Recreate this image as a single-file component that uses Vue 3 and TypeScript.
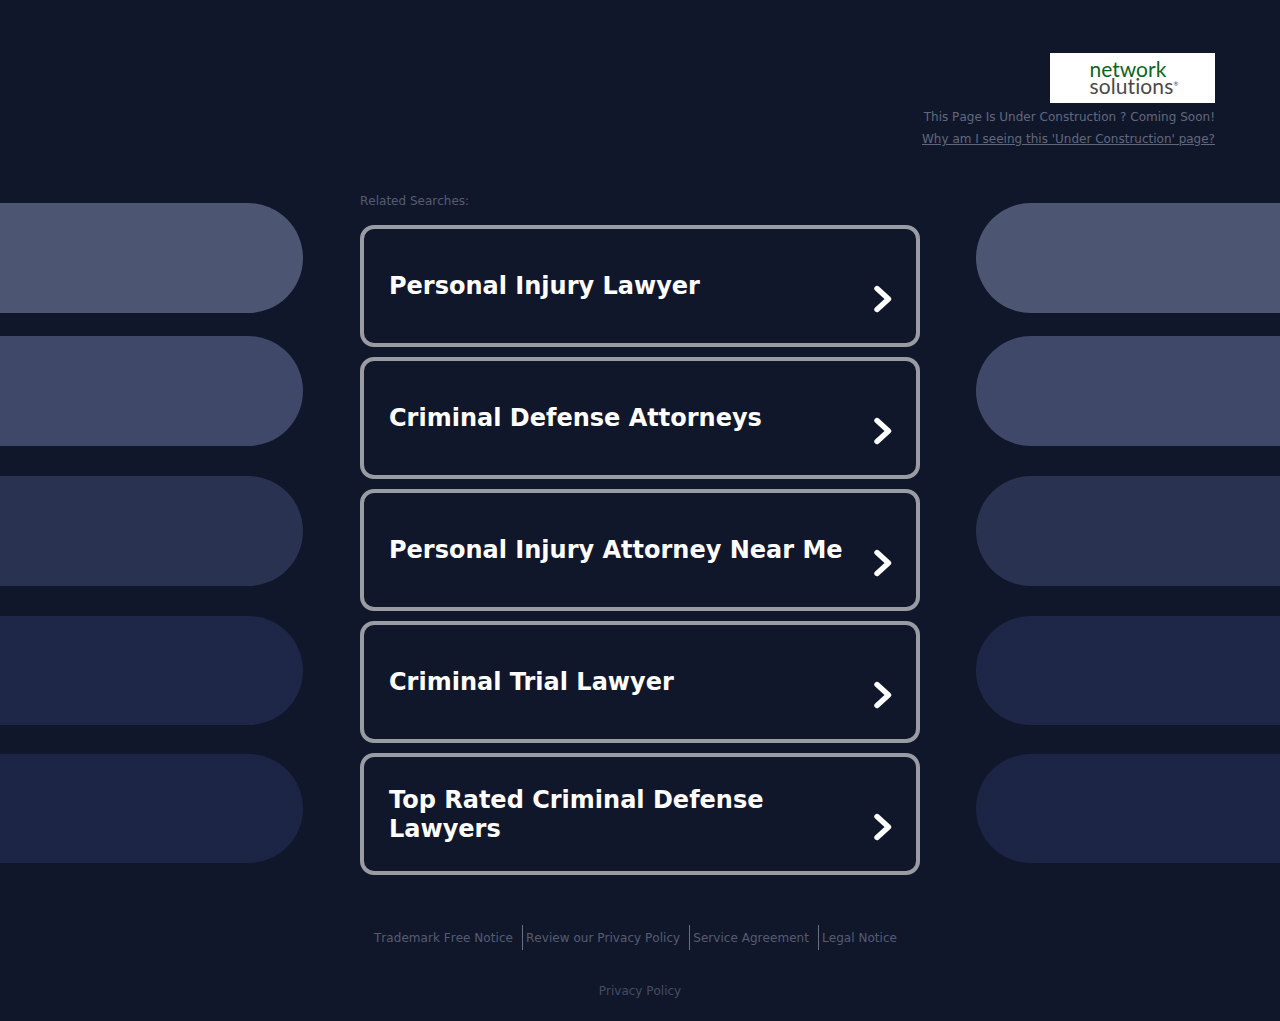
<script setup lang="ts">
const searches: string[] = [
  'Personal Injury Lawyer',
  'Criminal Defense Attorneys',
  'Personal Injury Attorney Near Me',
  'Criminal Trial Lawyer',
  'Top Rated Criminal Defense Lawyers',
]
const pills: string[] = ['p1', 'p2', 'p3', 'p4', 'p5']
const footerLinks: string[] = ['Trademark Free Notice', 'Review our Privacy Policy', 'Service Agreement', 'Legal Notice']
</script>

<template>
  <div class="page">
    <header class="header">
      <div class="logo">
        <div class="logo-inner">
          <span class="logo-network">network</span>
          <span class="logo-solutions">solutions<sup class="reg">®</sup></span>
        </div>
      </div>
      <p class="notice">This Page Is Under Construction ? Coming Soon!</p>
      <a class="why" href="#">Why am I seeing this 'Under Construction' page?</a>
    </header>

    <div class="layout">
      <div class="side">
        <div v-for="p in pills" :key="p" class="pill pill-left" :class="p"></div>
      </div>

      <main class="center">
        <div class="related">Related Searches:</div>
        <div class="cards">
          <a v-for="s in searches" :key="s" class="card" href="#">
            <span class="card-text">{{ s }}</span>
            <svg class="chev" width="18" height="28" viewBox="0 0 18 28" fill="none">
              <path d="M3 3.5 L14.5 14 L3 24.5" stroke="#fff" stroke-width="5.4" stroke-linecap="round" stroke-linejoin="round" />
            </svg>
          </a>
        </div>
      </main>

      <div class="side">
        <div v-for="p in pills" :key="p" class="pill pill-right" :class="p"></div>
      </div>
    </div>

    <footer class="footer">
      <nav class="foot-links">
        <a v-for="l in footerLinks" :key="l" class="foot-link" href="#">{{ l }}</a>
      </nav>
      <a class="privacy" href="#">Privacy Policy</a>
    </footer>
  </div>
</template>

<style>
html, body { margin: 0; background: #11172b; }
</style>

<style scoped>
.page {
  width: 1280px;
  height: 1021px;
  background: #11172b;
  font-family: "DejaVu Sans", sans-serif;
  overflow: hidden;
}
.header {
  height: 203px;
  box-sizing: border-box;
  padding: 53px 65px 0 0;
  display: flex;
  flex-direction: column;
  align-items: flex-end;
}
.logo {
  width: 165px;
  height: 50px;
  background: #fff;
  display: flex;
  align-items: center;
  justify-content: center;
}
.logo-inner {
  display: flex;
  flex-direction: column;
  margin: -2px 0 0 3px;
  font-family: "Lato", sans-serif;
  line-height: 17px;
  font-size: 21px;
}
.logo-network { color: #0b6623; }
.logo-solutions { color: #4a4a4a; letter-spacing: 0.1px; }
.reg { font-size: 6px; line-height: 0; vertical-align: 8px; }
.notice {
  margin: 7px 0 0;
  font-size: 12px;
  line-height: 15px;
  color: #61687d;
  font-kerning: none;
  letter-spacing: 0.02px;
}
.why {
  margin-top: 7px;
  font-size: 12px;
  line-height: 15px;
  color: #61687d;
  text-decoration: underline;
  font-kerning: none;
}
.layout {
  display: grid;
  grid-template-columns: 360px 616px 304px;
}
.side {
  display: flex;
  flex-direction: column;
}
.center {
  margin-top: -9px;
  width: 560px;
}
.pill {
  width: 303px;
  height: 110px;
  box-sizing: border-box;
  background-image: repeating-conic-gradient(rgba(255, 255, 255, 0.012) 0 25%, transparent 0 50%);
  background-size: 2px 2px;
}
.pill-right { width: 304px; }
.pill-left { border-radius: 0 55px 55px 0; }
.pill-right { border-radius: 55px 0 0 55px; }
.p1 { background-color: #4b5471; }
.p2 { background-color: #3e4767; margin-top: 23px; }
.p3 { background-color: #283150; margin-top: 30px; }
.p4 { background-color: #1c2546; margin-top: 30px; height: 109px; }
.p5 { background-color: #1a2343; margin-top: 29px; height: 109px; }
.related {
  font-size: 12px;
  line-height: 15px;
  color: #555c72;
  height: 31px;
  font-kerning: none;
}
.cards {
  display: flex;
  flex-direction: column;
  gap: 10px;
}
.card {
  box-sizing: border-box;
  height: 122px;
  border: 4px solid #9a9ca3;
  border-radius: 14px;
  padding: 0 24px 0 25px;
  display: flex;
  align-items: center;
  justify-content: space-between;
  text-decoration: none;
  color: #fff;
}
.card-text {
  font-size: 24px;
  font-weight: 700;
  line-height: 29px;
  padding-top: 1px;
  max-width: 470px;
}
.chev {
  flex: none;
  margin-top: 26px;
}
.footer {
  display: flex;
  flex-direction: column;
  align-items: center;
}
.foot-links {
  margin-top: 50px;
  display: flex;
  margin-left: -12px;
}
.foot-link {
  font-size: 12px;
  height: 25px;
  line-height: 27px;
  color: #555c72;
  text-decoration: none;
  padding: 0 9px 0 3px;
  border-right: 1px solid #6b7080;
  font-kerning: none;
  letter-spacing: 0.04px;
}
.foot-link:last-child { border-right: 0; padding-right: 0; }
.privacy {
  margin-top: 34px;
  font-size: 12px;
  line-height: 15px;
  color: #454c61;
  text-decoration: none;
  font-kerning: none;
}
</style>
